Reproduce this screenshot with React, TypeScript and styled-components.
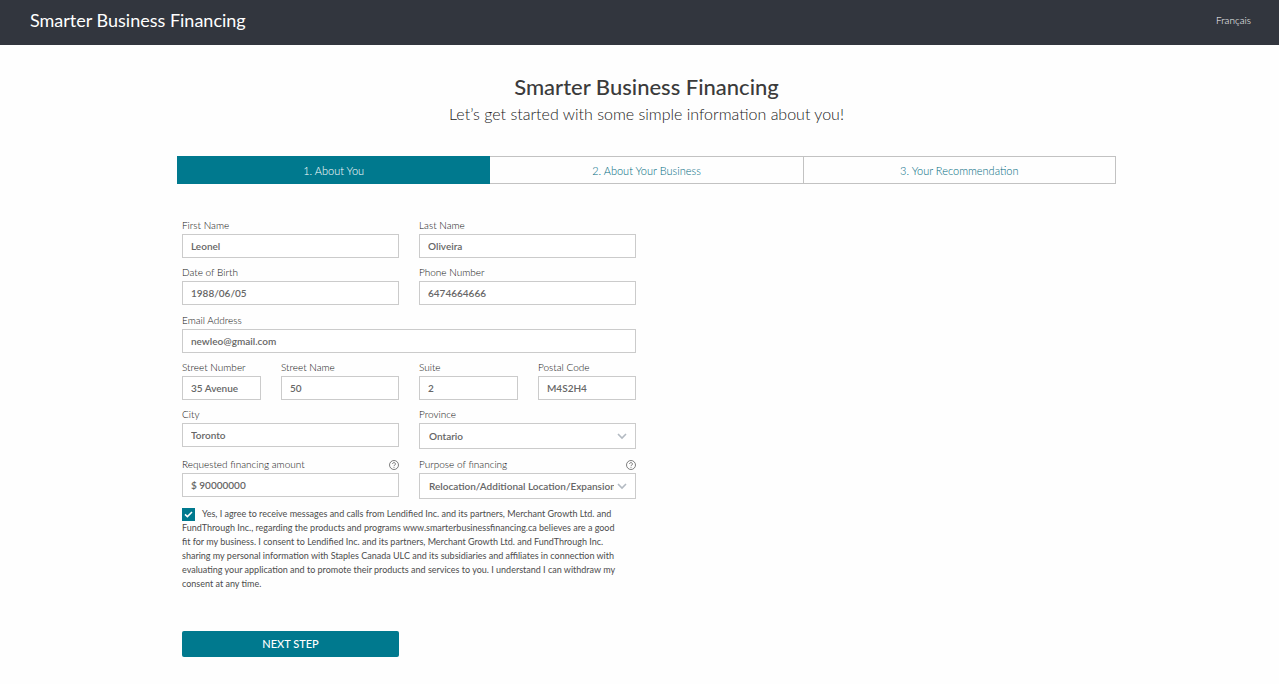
import React from "react";
import styled, { createGlobalStyle } from "styled-components";

const teal = "#00798e";
const lineColor = "#cbcbcb";

const GlobalStyle = createGlobalStyle`
  *, *::before, *::after { box-sizing: border-box; }
  body {
    margin: 0;
    background: #fefefe;
    color: #3b3b3b;
    font-family: Lato, "Liberation Sans", sans-serif;
    font-size: 10px;
    font-weight: 300;
  }
  button, input, select { font: inherit; color: inherit; border-radius: 0; }
`;

const Header = styled.header`
  display: flex;
  justify-content: space-between;
  align-items: center;
  padding: 0 28px 5px 30px;
  height: 45px;
  background: #32363e;
  color: #fff;
`;

const Brand = styled.a`
  font-size: 18px;
  line-height: 24px;
  font-weight: 400;
  color: inherit;
  text-decoration: none;
`;

const Language = styled.a`
  color: inherit;
  line-height: 16px;
  text-decoration: none;
`;

const Main = styled.main`
  padding: 28px 0 24px 14px;
`;

const Content = styled.div`
  max-width: 939px;
  margin: 0 auto;
`;

const Title = styled.h1`
  margin: 0;
  font-size: 22px;
  line-height: 28px;
  font-weight: 500;
  text-align: center;
`;

const Subtitle = styled.p`
  margin: 0 0 30px;
  color: #222;
  font-size: 16px;
  line-height: 25px;
  text-align: center;
`;

const Steps = styled.nav`
  display: grid;
  grid-template-columns: repeat(3, 1fr);
  height: 28px;
  border: 1px solid #c2c2c2;
`;

const Step = styled.button<{ $active?: boolean }>`
  margin: ${(p) => (p.$active ? "-1px 0 -1px -1px" : "0")};
  padding: 0;
  border: 0;
  background: ${(p) => (p.$active ? teal : "transparent")};
  color: ${(p) => (p.$active ? "#fff" : "#006a7e")};
  font-size: 11px;
  font-weight: 300;
  & + & + & { border-left: 1px solid #c2c2c2; }
`;

const Form = styled.form`
  max-width: 459px;
  margin-top: 34px;
  padding-left: 5px;
`;

const Section = styled.div`
  display: grid;
  gap: 7px;
  margin-bottom: 8px;
`;

const Row = styled.div<{ $columns?: string }>`
  display: grid;
  grid-template-columns: ${(p) => p.$columns ?? "1fr 1fr"};
  align-items: start;
  gap: 20px;
`;

const FieldBox = styled.div`
  min-width: 0;
`;

const LabelLine = styled.div`
  display: flex;
  justify-content: space-between;
  align-items: center;
  height: 16px;
  color: #111;
  line-height: 16px;
  white-space: nowrap;
  label { padding-bottom: 2px; }
`;

const TextInput = styled.input`
  display: block;
  width: 100%;
  height: 24px;
  padding: 0 8px;
  border: 1px solid ${lineColor};
  background: #fff;
  color: #666;
  font-size: 10px;
  font-weight: 600;
`;

const SelectBox = styled.div`
  position: relative;
`;

const Select = styled.select`
  display: block;
  appearance: none;
  width: 100%;
  height: 26px;
  padding: 0 21px 1px 9px;
  border: 1px solid ${lineColor};
  background: #fff;
  color: #666;
  font-size: 10px;
  font-weight: 600;
`;

const Chevron = styled.svg`
  position: absolute;
  top: 10px;
  right: 9px;
  pointer-events: none;
`;

const HelpButton = styled.button`
  display: flex;
  padding: 0;
  border: 0;
  background: none;
`;

const Consent = styled.label`
  display: block;
  color: #4c4c4c;
  font-size: 9px;
  font-weight: 400;
  line-height: 14px;
  white-space: nowrap;
`;

const CheckHolder = styled.span`
  position: relative;
  display: inline-block;
  width: 13px;
  height: 13px;
  margin-right: 7px;
  vertical-align: top;
  svg { position: absolute; top: 0; left: 0; pointer-events: none; }
`;

const Checkbox = styled.input`
  appearance: none;
  display: block;
  width: 13px;
  height: 13px;
  margin: 1px 0 0;
  background: ${teal};
`;

const Submit = styled.button`
  display: block;
  width: calc(50% - 10px);
  height: 26px;
  margin-top: 40px;
  padding: 0 0 2px;
  border: 0;
  border-radius: 2px;
  background: ${teal};
  color: #fff;
  font-size: 11px;
  font-weight: 500;
`;

function Help({ topic }: { topic: string }) {
  return (
    <HelpButton type="button" aria-label={`Help: ${topic}`}>
      <svg width="10" height="10" viewBox="0 0 10 10" fill="none" stroke="#5f5f5f">
        <circle cx="5" cy="5" r="4.5" strokeWidth="0.8" />
        <path d="M3.6 4a1.4 1.4 0 1 1 2.2 1.1C5.2 5.4 5 5.6 5 6.2M5 7v.8" strokeWidth="0.8" />
      </svg>
    </HelpButton>
  );
}

type FieldProps = { id: string; label: string; value: string; help?: boolean; type?: string };

function Field({ id, label, value, help, type = "text" }: FieldProps) {
  return (
    <FieldBox>
      <LabelLine>
        <label htmlFor={id}>{label}</label>
        {help && <Help topic={label} />}
      </LabelLine>
      <TextInput id={id} type={type} defaultValue={value} />
    </FieldBox>
  );
}

function SelectField({ id, label, value, help }: FieldProps) {
  return (
    <FieldBox>
      <LabelLine>
        <label htmlFor={id}>{label}</label>
        {help && <Help topic={label} />}
      </LabelLine>
      <SelectBox>
        <Select id={id} defaultValue={value}>
          <option>{value}</option>
        </Select>
        <Chevron width="10" height="7" viewBox="0 0 10 7" fill="none" stroke="#b3bac2" strokeWidth="1.6">
          <path d="M1 1l4 4 4-4" />
        </Chevron>
      </SelectBox>
    </FieldBox>
  );
}

export default function App() {
  return (
    <>
      <GlobalStyle />
      <Header>
        <Brand href="#">Smarter Business Financing</Brand>
        <Language href="#fr">Français</Language>
      </Header>
      <Main>
        <Content>
          <Title>Smarter Business Financing</Title>
          <Subtitle>Let’s get started with some simple information about you!</Subtitle>
          <Steps>
            <Step type="button" $active>1. About You</Step>
            <Step type="button">2. About Your Business</Step>
            <Step type="button">3. Your Recommendation</Step>
          </Steps>
          <Form>
            <Section>
              <Row>
                <Field id="first" label="First Name" value="Leonel" />
                <Field id="last" label="Last Name" value="Oliveira" />
              </Row>
              <Row>
                <Field id="dob" label="Date of Birth" value="1988/06/05" />
                <Field id="phone" label="Phone Number" value="6474664666" type="tel" />
              </Row>
            </Section>
            <Section>
              <Row $columns="1fr">
                <Field id="email" label="Email Address" value="newleo@gmail.com" type="email" />
              </Row>
              <Row $columns="79fr 118fr 99fr 98fr">
                <Field id="street-number" label="Street Number" value="35 Avenue" />
                <Field id="street-name" label="Street Name" value="50" />
                <Field id="suite" label="Suite" value="2" />
                <Field id="postal" label="Postal Code" value="M4S2H4" />
              </Row>
              <Row>
                <Field id="city" label="City" value="Toronto" />
                <SelectField id="province" label="Province" value="Ontario" />
              </Row>
            </Section>
            <Section>
              <Row>
                <Field id="amount" label="Requested financing amount" value="$ 90000000" help />
                <SelectField
                  id="purpose"
                  label="Purpose of financing"
                  value="Relocation/Additional Location/Expansion"
                  help
                />
              </Row>
            </Section>
            <Consent>
              <CheckHolder>
                <Checkbox type="checkbox" defaultChecked />
                <svg width="13" height="14" viewBox="0 0 13 14" fill="none" stroke="#fff" strokeWidth="1.5">
                  <path d="M3 7.4l2.4 2.2L10 5" />
                </svg>
              </CheckHolder>
              Yes, I agree to receive messages and calls from Lendified Inc. and its partners, Merchant Growth Ltd. and
              <br />
              FundThrough Inc., regarding the products and programs www.smarterbusinessfinancing.ca believes are a good
              <br />
              fit for my business. I consent to Lendified Inc. and its partners, Merchant Growth Ltd. and FundThrough Inc.
              <br />
              sharing my personal information with Staples Canada ULC and its subsidiaries and affiliates in connection with
              <br />
              evaluating your application and to promote their products and services to you. I understand I can withdraw my
              <br />
              consent at any time.
            </Consent>
            <Submit type="submit">NEXT STEP</Submit>
          </Form>
        </Content>
      </Main>
    </>
  );
}
